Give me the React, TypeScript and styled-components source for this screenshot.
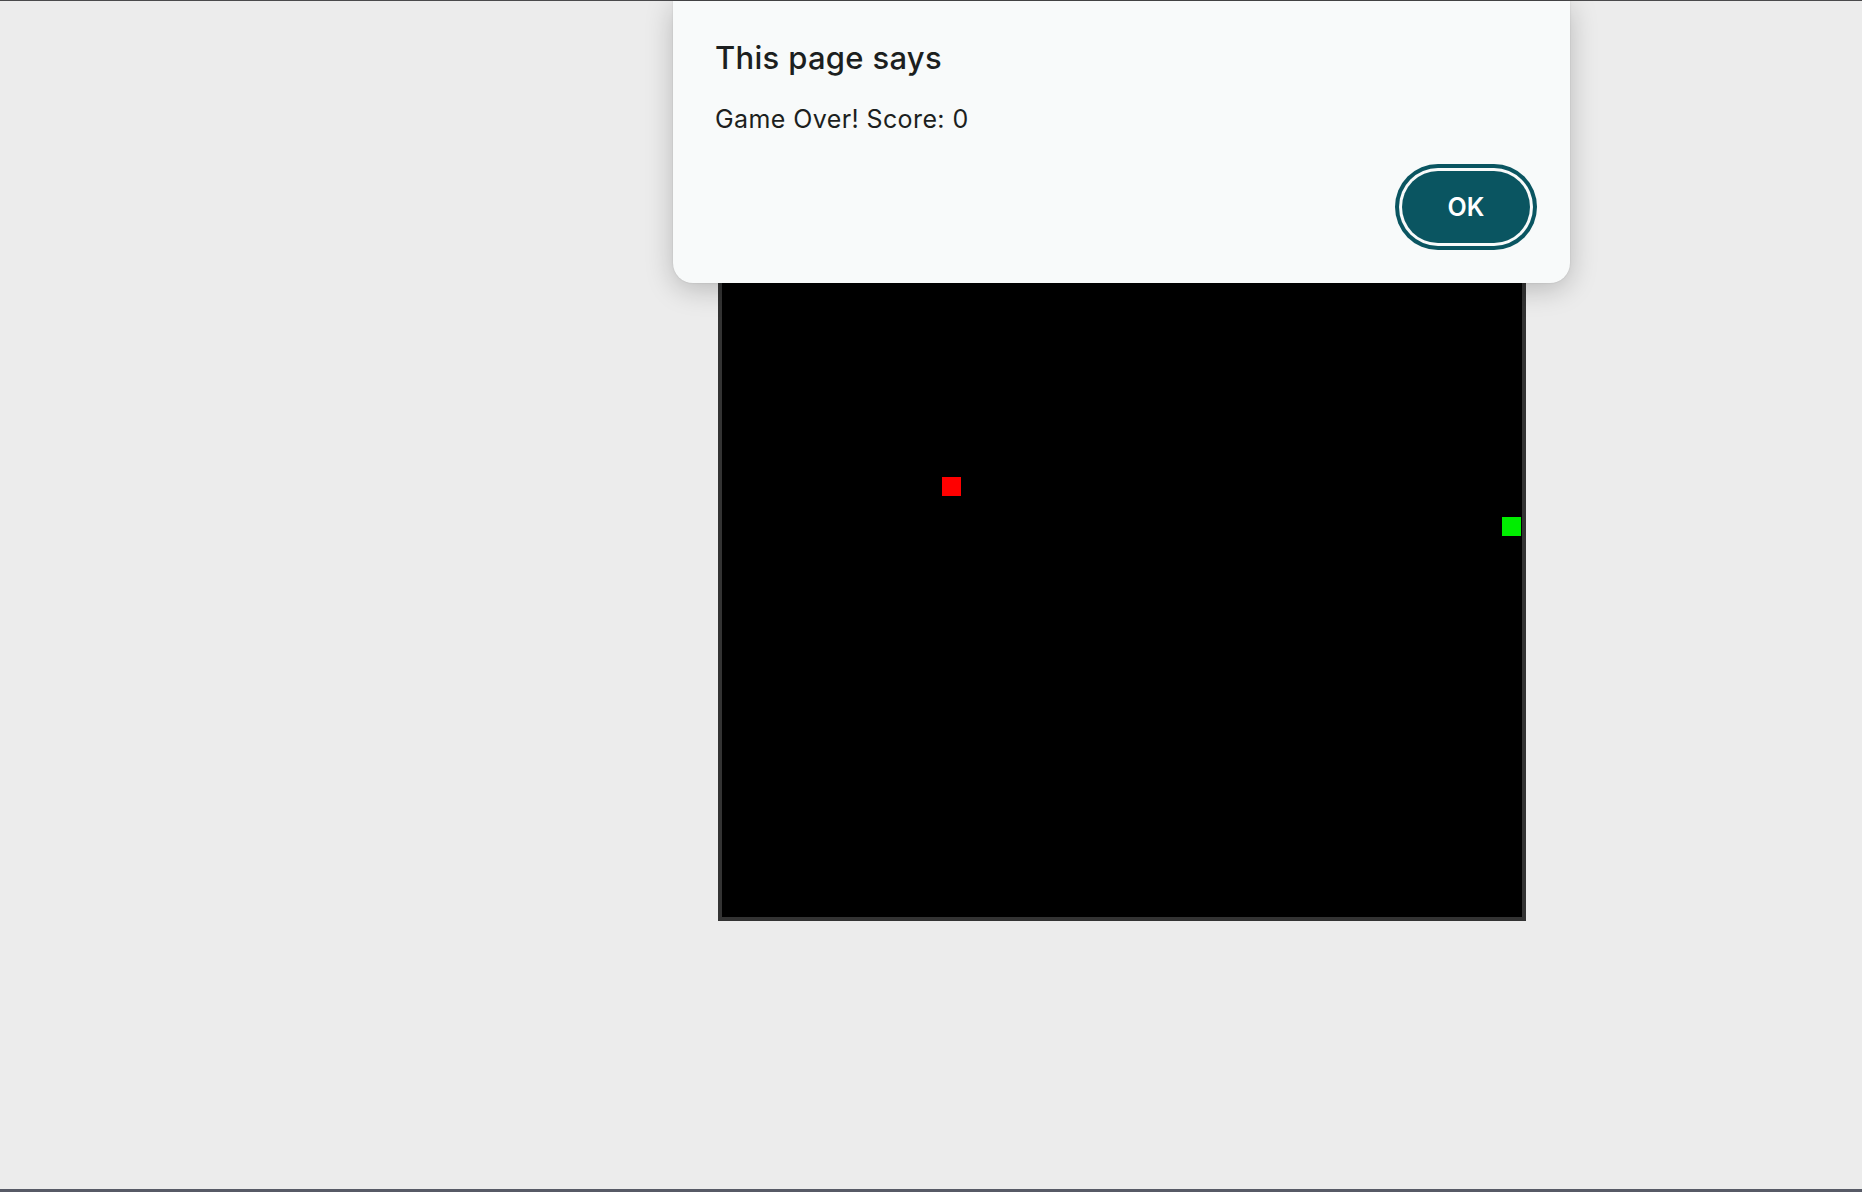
import React from "react";
import styled, { createGlobalStyle } from "styled-components";

const GlobalStyle = createGlobalStyle`
  html, body {
    margin: 0;
    padding: 0;
    overflow: hidden;
    background: #ececec;
    font-family: Inter, "Noto Sans", "Liberation Sans", sans-serif;
  }
  * { box-sizing: border-box; }
`;

const Page = styled.div`
  position: relative;
  width: 1862px;
  height: 1192px;
  background: #ececec;
  border-top: 1px solid #4a4a4c;
  border-bottom: 3px solid #575a66;
  padding: 112px 0 0 718px;
  display: flex;
  align-items: flex-start;
`;

const Board = styled.div`
  position: relative;
  width: 808px;
  height: 808px;
  background: #000;
  border: 4px solid #333;
  flex: none;
`;

const Cell = styled.div<{ $color: string }>`
  position: absolute;
  width: 19px;
  height: 19px;
  background: ${(p) => p.$color};
`;

const Dialog = styled.div`
  position: absolute;
  top: 0;
  left: 673px;
  width: 897px;
  height: 282px;
  background: #f8fafa;
  border-radius: 0 0 20px 20px;
  box-shadow: 0 6px 28px rgba(0, 0, 0, 0.22), 0 0 2px rgba(0, 0, 0, 0.12);
  padding: 37px 33px 33px 42px;
  display: flex;
  flex-direction: column;
  z-index: 10;
`;

const Title = styled.h2`
  margin: 0;
  font-size: 31px;
  line-height: 40px;
  font-weight: 500;
  color: #1c1f20;
  letter-spacing: 0.3px;
`;

const Message = styled.p`
  margin: 26px 0 0 0;
  font-size: 25px;
  line-height: 30px;
  font-weight: 400;
  color: #1c1f20;
  letter-spacing: 0.4px;
`;

const Actions = styled.div`
  margin-top: auto;
  display: flex;
  justify-content: flex-end;
`;

const OkButton = styled.button`
  width: 128px;
  height: 72px;
  margin: 7px;
  border: none;
  border-radius: 999px;
  background: #0a5561;
  color: #ffffff;
  font-family: Inter, "Noto Sans", "Liberation Sans", sans-serif;
  font-size: 25px;
  font-weight: 600;
  box-shadow: 0 0 0 3px #f8fafa, 0 0 0 7px #0a5561;
  cursor: pointer;
`;

export default function App() {
  return (
    <>
      <GlobalStyle />
      <Page>
        <Board>
          <Cell $color="#ff0000" style={{ left: 220, top: 360 }} />
          <Cell $color="#00ee00" style={{ left: 780, top: 400 }} />
        </Board>
        <Dialog role="alertdialog">
          <Title>This page says</Title>
          <Message>Game Over! Score: 0</Message>
          <Actions>
            <OkButton>OK</OkButton>
          </Actions>
        </Dialog>
      </Page>
    </>
  );
}
